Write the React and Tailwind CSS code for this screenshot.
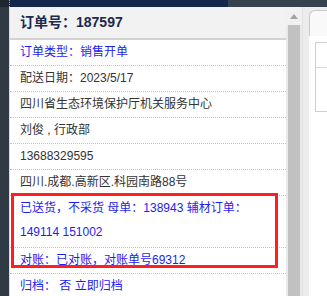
import React from 'react';

const rows = [
  { text: '订单类型：销售开单', blue: true },
  { text: '配送日期：2023/5/17' },
  { text: '四川省生态环境保护厅机关服务中心' },
  { text: '刘俊 , 行政部' },
  { text: '13688329595' },
  { text: '四川.成都.高新区.科园南路88号' },
];

function Row({ children, blue }) {
  return (
    <div
      className={`pl-[10px] leading-[25px] h-[26px] border-b border-dotted border-[#c4c4c4] whitespace-nowrap ${
        blue ? 'text-[#1d1df0]' : 'text-[#333333]'
      }`}
    >
      {children}
    </div>
  );
}

function Scrollbar() {
  return (
    <div className="w-[17px] flex flex-col bg-[#e9e9e9] border-r border-[#e2e2e2]">
      <div className="h-[18px] bg-[#f1f1f1] flex items-center justify-center">
        <svg width="8" height="5" viewBox="0 0 8 5">
          <polygon points="4,0 8,5 0,5" fill="#a3a3a3" />
        </svg>
      </div>
      <div className="flex-1 mx-[2px] bg-[#c1c1c1]" />
    </div>
  );
}

export default function App() {
  return (
    <div
      className="w-[327px] h-[296px] overflow-hidden flex flex-col bg-white text-[12px]"
      style={{ fontFamily: '"Liberation Sans", "Noto Sans CJK SC", sans-serif' }}
    >
      {/* top bar */}
      <div className="h-[7px] flex shrink-0">
        <div className="w-[9px] bg-[#1f2630]" />
        <div className="w-px border-l border-dotted border-[#9aa3b0] bg-[#15264a]" />
        <div className="w-[218px] bg-[#14264b]" />
        <div className="flex-1 bg-[#37424f]" />
      </div>

      <div className="flex-1 flex min-h-0">
        {/* left strip */}
        <div className="w-[9px] bg-[#2f3a45]" />

        {/* order panel */}
        <div className="w-[277px] border-l border-[#dcdcdc] flex flex-col">
          <div className="h-[33px] bg-[#f2f2f2] border-b-2 border-[#d2d2d2] flex items-center pl-[10px] shrink-0">
            <span className="text-[14px] font-bold text-[#1b2a4e]">订单号：187597</span>
          </div>

          {rows.map((r, i) => (
            <Row key={i} blue={r.blue}>
              {r.text}
            </Row>
          ))}

          <div className="relative">
            <div className="pl-[10px] leading-[24px] pb-[3px] h-[52px] border-b border-dotted border-[#c4c4c4] text-[#1d1df0] whitespace-nowrap">
              <div>已送货，不采货 母单：138943 辅材订单：</div>
              <div>149114 151002</div>
            </div>
            <Row blue>对账：已对账，对账单号69312</Row>
            <div className="absolute top-[-3px] bottom-[6px] left-px right-[8px] border-[3px] border-[#ff1f1f] pointer-events-none" />
          </div>

          <Row blue>归档： 否 立即归档</Row>
        </div>

        <Scrollbar />

        {/* right side panel */}
        <div className="flex-1 bg-[#ececec] flex flex-col pt-[3px] pl-[6px]">
          <div className="h-[26px] rounded-tl-[6px] border-l border-t border-[#c9c9c9] bg-[#f9f9f9] shrink-0" />
          <div className="flex-1 bg-white pl-[6px] pt-[6px]">
            <div className="h-[70px] border-l border-t border-b border-[#cfcfcf] flex flex-col">
              <div className="h-[25px] border-b border-[#dadada]" />
            </div>
          </div>
        </div>
      </div>
    </div>
  );
}
